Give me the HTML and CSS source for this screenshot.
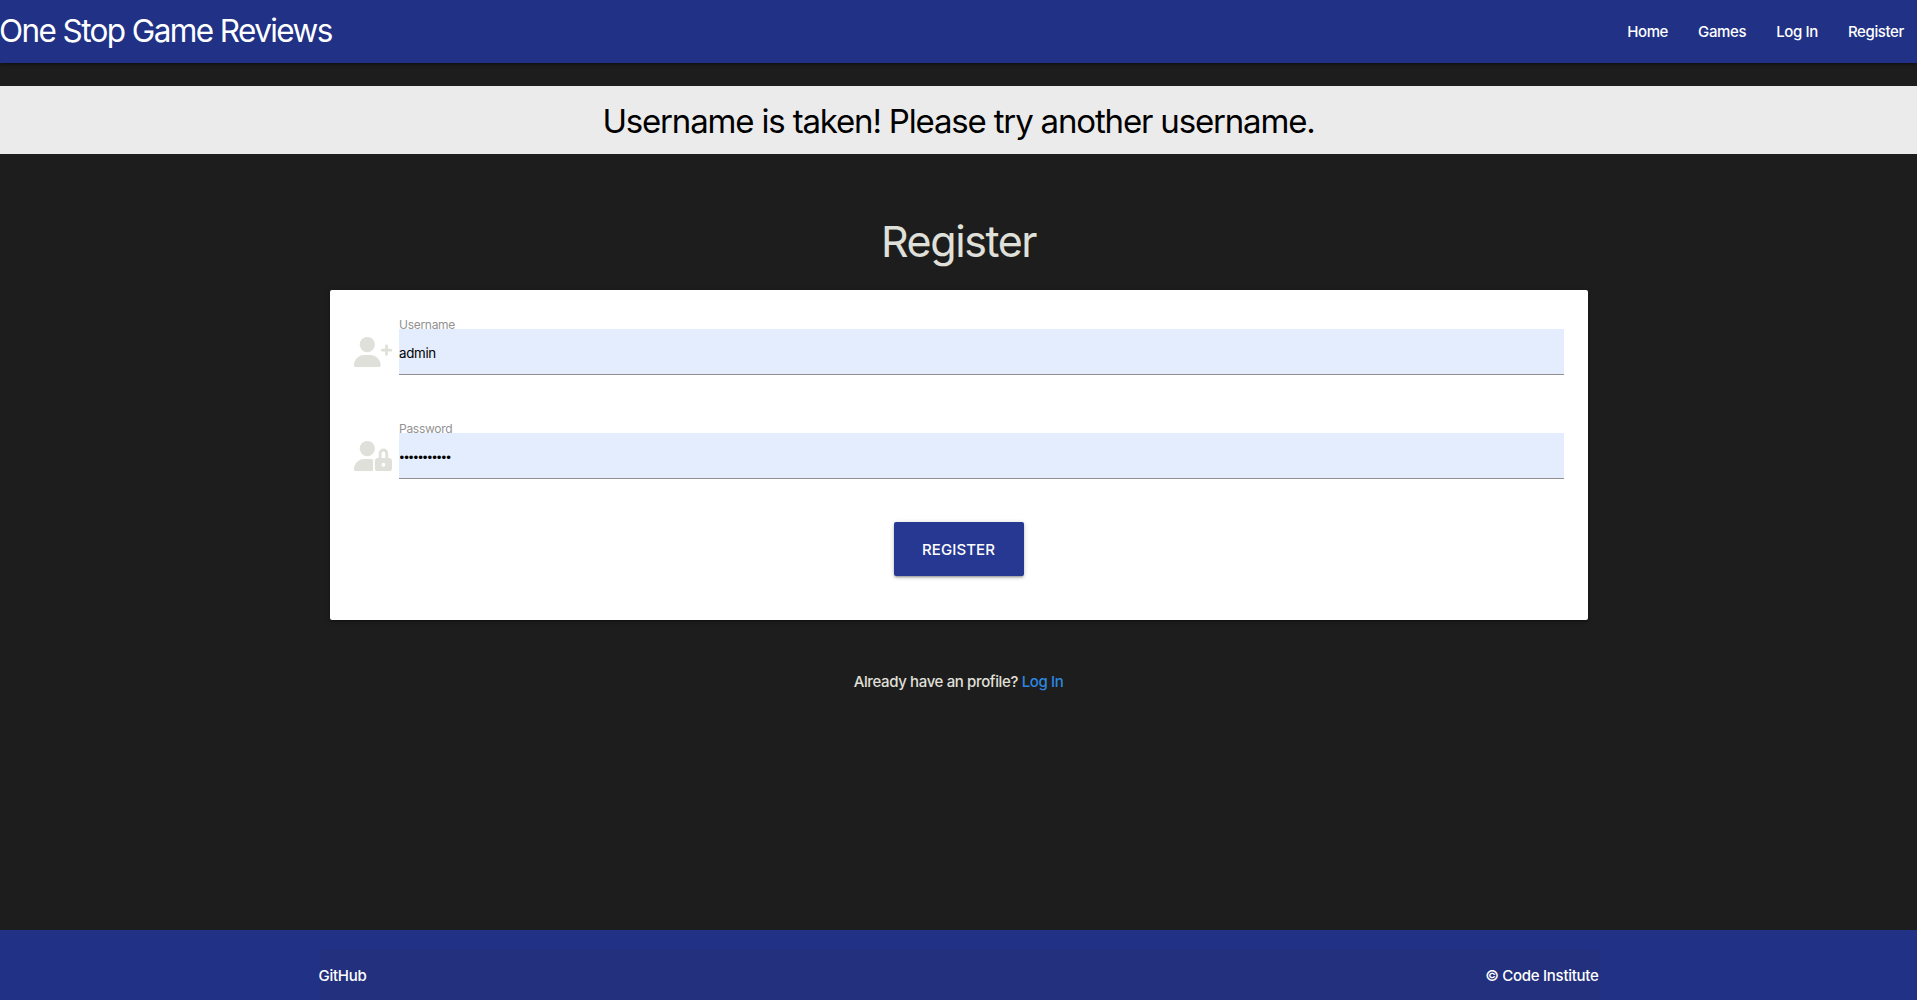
FILE: index.html
```html
<!DOCTYPE html>
<html lang="en">
<head>
<meta charset="utf-8">
<title>One Stop Game Reviews</title>
<link rel="stylesheet" href="styles.css">
</head>
<body>
<header class="navbar">
  <a class="brand">One Stop Game Reviews</a>
  <nav class="nav-links"><a>Home</a><a>Games</a><a>Log In</a><a>Register</a></nav>
</header>
<h4 class="flash">Username is taken! Please try another username.</h4>
<main>
  <h3 class="title">Register</h3>
  <form class="card">
    <div class="field">
      <svg class="icon" viewBox="0 0 640 512">
        <circle cx="224" cy="128" r="128"/>
        <path d="M174 304h100c96 0 174 78 174 174 0 19-15 34-34 34H34c-19 0-34-15-34-34 0-96 78-174 174-174z"/>
        <path class="line" d="M548 150v144M476 222h144"/>
      </svg>
      <div class="control">
        <label for="username">Username</label>
        <input id="username" type="text" value="admin">
      </div>
    </div>
    <div class="field">
      <svg class="icon" viewBox="0 0 640 512">
        <circle cx="224" cy="128" r="128"/>
        <path d="M174 304h100c18 0 35 3 51 8-4 8-5 16-5 24v176H34c-19 0-34-15-34-34 0-96 78-174 174-174z"/>
        <path fill-rule="evenodd" d="M592 288h-16v-80a80 80 0 0 0-160 0v80h-16c-26 0-48 22-48 48v128c0 26 22 48 48 48h192c26 0 48-22 48-48V336c0-26-22-48-48-48zM464 208a32 32 0 0 1 64 0v80h-64zM496 432a32 32 0 1 1 0-64 32 32 0 0 1 0 64z"/>
      </svg>
      <div class="control">
        <label for="password">Password</label>
        <input id="password" type="password" value="adminadmin1">
      </div>
    </div>
    <button class="submit" type="button">Register</button>
  </form>
  <p class="switch">Already have an profile? <a>Log In</a></p>
</main>
<footer class="footer">
  <div class="footer-bar"><a>GitHub</a><span>© Code Institute</span></div>
</footer>
</body>
</html>
```
FILE: styles.css
```css
* {
  box-sizing: border-box;
}

body {
  margin: 0;
  height: 1000px;
  display: flex;
  flex-direction: column;
  overflow: hidden;
  background: #1d1d1d;
  color: #e0e0da;
  font: 450 15px/1.5 Inter, sans-serif;
  letter-spacing: -0.37px;
}

.navbar {
  flex: none;
  height: 63px;
  display: flex;
  justify-content: space-between;
  background: #203186;
  color: #fff;
  line-height: 63px;
  box-shadow: 0 2px 2px 0 rgba(0, 0, 0, .14), 0 3px 1px -2px rgba(0, 0, 0, .12), 0 1px 5px 0 rgba(0, 0, 0, .2);
}

.brand {
  margin-left: -1px;
  font-size: 31.5px;
  font-weight: 400;
  line-height: 61px;
  letter-spacing: -1.6px;
}

.nav-links {
  display: flex;
}

.nav-links a {
  padding: 0 15px;
}

.nav-links a:last-child {
  padding-right: 13px;
}

.flash {
  flex: none;
  height: 68px;
  margin: 23px 0 0;
  background: #ebebeb;
  color: #000;
  font-size: 33px;
  font-weight: 400;
  line-height: 71px;
  letter-spacing: -1.17px;
  text-align: center;
}

main {
  flex: 1;
}

.title {
  margin: 65px 0 27px;
  font-size: 43px;
  font-weight: 400;
  line-height: 44px;
  letter-spacing: -1.43px;
  text-align: center;
}

.card {
  width: 1258px;
  height: 330px;
  margin: 0 auto;
  padding: 25px 24px 0;
  display: flex;
  flex-direction: column;
  background: #fff;
  border-radius: 2px;
  box-shadow: 0 2px 2px 0 rgba(0, 0, 0, .14), 0 3px 1px -2px rgba(0, 0, 0, .12), 0 1px 5px 0 rgba(0, 0, 0, .2);
}

.field {
  display: flex;
  height: 60px;
  margin-bottom: 44px;
}

.icon {
  flex: none;
  width: 38px;
  height: 30.4px;
  margin: 21.5px 7px 0 0;
  fill: #e0e0da;
}

.icon .line {
  stroke: #e0e0da;
  stroke-width: 46;
  stroke-linecap: round;
}

.control {
  flex: 1;
  display: flex;
  flex-direction: column;
}

label {
  height: 14px;
  padding-left: 0.5px;
  color: #929292;
  font-size: 12px;
  font-weight: 400;
  line-height: 19px;
  letter-spacing: -0.28px;
}

input {
  width: 100%;
  height: 46px;
  padding: 2px 0 0 0.5px;
  border: 0;
  border-bottom: 1px solid #8f8f93;
  border-radius: 0;
  background: #e4edfd;
  color: #000;
  font: 400 13.33px Inter, sans-serif;
  letter-spacing: -0.3px;
  outline: 0;
}

input[type="password"] {
  padding: 4px 0 0 1px;
  font-family: "Liberation Sans", sans-serif;
  letter-spacing: 0;
}

.submit {
  align-self: center;
  width: 130px;
  height: 54px;
  margin-top: -1px;
  padding: 2px 0 0;
  border: 0;
  border-radius: 2px;
  background: #273892;
  color: #fff;
  font: 450 15px/52px Inter, sans-serif;
  letter-spacing: 0.1px;
  text-transform: uppercase;
  box-shadow: 0 2px 2px 0 rgba(0, 0, 0, .14), 0 3px 1px -2px rgba(0, 0, 0, .12), 0 1px 5px 0 rgba(0, 0, 0, .2);
}

.switch {
  margin: 51px 0 0;
  text-align: center;
}

.switch a {
  color: #2e86e0;
}

.footer {
  flex: none;
  height: 70px;
  padding-top: 20px;
  background: #203186;
  color: #fff;
}

.footer-bar {
  width: 1280px;
  height: 50px;
  margin: 0 auto;
  display: flex;
  justify-content: space-between;
  background: #22307e;
  line-height: 51px;
  letter-spacing: -0.28px;
}
```
